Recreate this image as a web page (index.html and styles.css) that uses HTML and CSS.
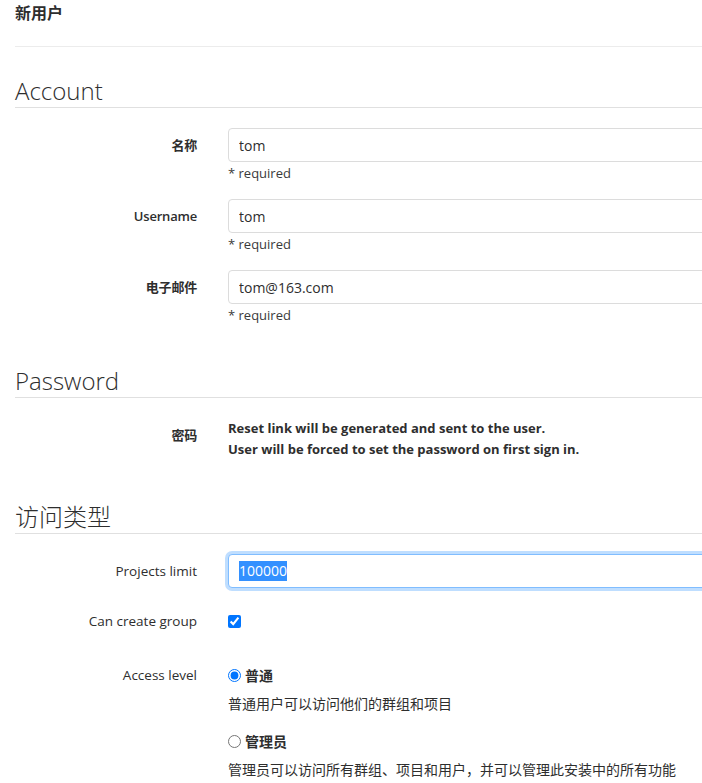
FILE: index.html
```html
<!DOCTYPE html>
<html lang="zh">
<head>
<meta charset="utf-8">
<title>新用户</title>
<link rel="stylesheet" href="styles.css">
</head>
<body>
<div class="page">
  <h3 class="page-title">新用户</h3>
  <hr class="divider">
  <form class="user-form">
    <section class="section">
      <h4 class="section-title first">Account</h4>
      <div class="form-group">
        <label class="control-label">名称</label>
        <div class="controls">
          <input class="form-control" type="text" value="tom">
          <div class="hint">* required</div>
        </div>
      </div>
      <div class="form-group">
        <label class="control-label">Username</label>
        <div class="controls">
          <input class="form-control" type="text" value="tom">
          <div class="hint">* required</div>
        </div>
      </div>
      <div class="form-group">
        <label class="control-label">电子邮件</label>
        <div class="controls">
          <input class="form-control" type="text" value="tom@163.com">
          <div class="hint">* required</div>
        </div>
      </div>
    </section>

    <section class="section">
      <h4 class="section-title">Password</h4>
      <div class="form-group password-group">
        <label class="control-label">密码</label>
        <div class="controls">
          <p class="bold-text">Reset link will be generated and sent to the user.</p>
          <p class="bold-text">User will be forced to set the password on first sign in.</p>
        </div>
      </div>
    </section>

    <section class="section">
      <h4 class="section-title access-title">访问类型</h4>
      <div class="form-group">
        <label class="control-label normal">Projects limit</label>
        <div class="controls">
          <div class="form-control focused"><span class="selected">100000</span></div>
        </div>
      </div>
      <div class="form-group check-group">
        <label class="control-label normal">Can create group</label>
        <div class="controls check-controls">
          <input type="checkbox" class="check" checked>
        </div>
      </div>
      <div class="form-group">
        <label class="control-label normal">Access level</label>
        <div class="controls">
          <label class="radio-line"><input type="radio" name="level" class="radio" checked><span class="radio-text">普通</span></label>
          <div class="radio-desc">普通用户可以访问他们的群组和项目</div>
          <label class="radio-line second"><input type="radio" name="level" class="radio"><span class="radio-text">管理员</span></label>
          <div class="radio-desc">管理员可以访问所有群组、项目和用户，并可以管理此安装中的所有功能</div>
        </div>
      </div>
    </section>
  </form>
</div>
</body>
</html>
```

FILE: styles.css
```css
html, body {
  margin: 0;
  padding: 0;
  overflow: hidden;
  background: #fff;
}

body {
  font-family: "Open Sans", "Noto Sans CJK SC", sans-serif;
  font-size: 14px;
  color: #2e2e2e;
}

.page {
  width: 1300px;
  padding-left: 15px;
}

.page-title {
  margin: 0;
  font-size: 16px;
  line-height: 26px;
  font-weight: 700;
  color: #2e2e2e;
}

.divider {
  margin: 20px 0 0 0;
  border: 0;
  border-top: 1px solid #ececec;
  height: 0;
}

.user-form {
  margin: 0;
}

.section {
  margin: 0;
  padding: 0;
}

.section-title {
  display: block;
  padding: 0 0 2px 0;
  margin: 42px 0 20px 0;
  font-size: 24px;
  line-height: 28px;
  font-weight: 300;
  color: #2e2e2e;
  border-bottom: 1px solid #e0e0e0;
}

.section-title.first {
  margin-top: 30px;
}

.section-title.access-title {
  margin-top: 43px;
}

.form-group {
  display: grid;
  grid-template-columns: 182px 1fr;
  column-gap: 31px;
  margin-bottom: 16px;
}

.check-group {
  margin-bottom: 20px;
}

.control-label {
  text-align: right;
  line-height: 34px;
  font-size: 13px;
  font-weight: 600;
  letter-spacing: -0.2px;
  color: #2e2e2e;
}

.control-label.normal {
  font-weight: 400;
  font-size: 13.5px;
  letter-spacing: 0;
}

.controls {
  min-width: 0;
}

.form-control {
  display: block;
  box-sizing: border-box;
  width: 100%;
  height: 34px;
  padding: 0 10px;
  font-family: inherit;
  font-size: 14px;
  line-height: 32px;
  color: #2e2e2e;
  background: #fff;
  border: 1px solid #dcdcdc;
  border-radius: 4px;
  outline: none;
}

.form-control.focused {
  border-color: #80bdff;
  box-shadow: 0 0 0 3px rgba(0, 123, 255, 0.25);
}

.selected {
  background: #3390ff;
  color: #fff;
  display: inline-block;
  line-height: 20px;
  vertical-align: middle;
  margin-top: -2px;
}

.hint {
  margin-top: 1px;
  line-height: 20px;
  font-size: 13px;
  color: #3a3a3a;
}

.bold-text {
  margin: 0;
  font-size: 13px;
  line-height: 21px;
  font-weight: 700;
  color: #2e2e2e;
}

.check-controls {
  display: flex;
  align-items: center;
}

.check {
  margin: 0;
  width: 13px;
  height: 13px;
  accent-color: #0075ff;
}

.radio-line {
  display: flex;
  align-items: center;
  height: 34px;
  gap: 4px;
}

.radio-line.second {
  margin-top: 10px;
}

.radio {
  margin: 0;
  width: 13px;
  height: 13px;
  accent-color: #0075ff;
}

.radio-text {
  font-weight: 700;
  font-size: 14px;
}

.radio-desc {
  margin-top: 2px;
  line-height: 20px;
  font-size: 14px;
  color: #2e2e2e;
}
```
